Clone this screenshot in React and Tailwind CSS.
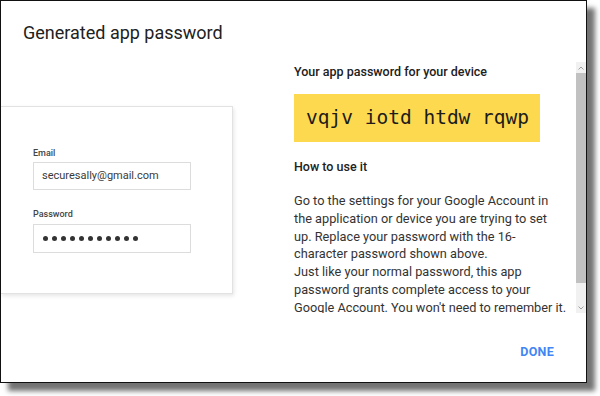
import React from "react";

export default function App() {
  const lines = [
    "Go to the settings for your Google Account in",
    "the application or device you are trying to set",
    "up. Replace your password with the 16-",
    "character password shown above.",
    "Just like your normal password, this app",
    "password grants complete access to your",
    "Google Account. You won't need to remember it.",
  ];
  return (
    <div className="w-[600px] h-[396px] bg-white" style={{ fontFamily: "Roboto, 'Liberation Sans', sans-serif" }}>
      <div className="w-[587px] h-[383px] border border-[#111] bg-white flex flex-col shadow-[8px_8px_5px_rgba(0,0,0,0.55)] overflow-hidden">
        <div className="pl-[22px] pt-[20px] text-[18px] leading-[24px] text-[#212121]">Generated app password</div>
        <div className="flex mt-[17px]">
          <div className="w-[284px] shrink-0">
            <div className="mt-[44px] w-[232px] h-[188px] bg-white border-y border-r border-[#e2e2e2] shadow-[1px_2px_4px_rgba(0,0,0,0.10)] pl-[32px] pt-[40px]">
              <div className="text-[9px] leading-[12px] font-medium text-[#444]">Email</div>
              <div className="mt-[3px] w-[158px] h-[28px] border border-[#dcdcdc] pl-[8px] flex items-center text-[11px] text-[#3a3a3a]">
                securesally@gmail.com
              </div>
              <div className="mt-[18px] text-[9px] leading-[12px] font-medium text-[#444]">Password</div>
              <div className="mt-[4px] w-[158px] h-[29px] border border-[#dcdcdc] pl-[9px] flex items-center gap-[4px]">
                {Array.from({ length: 11 }).map((_, i) => (
                  <span key={i} className="w-[5px] h-[5px] rounded-full bg-[#333] inline-block" />
                ))}
              </div>
            </div>
          </div>
          <div className="flex-1 flex h-[251px] overflow-hidden">
            <div className="flex-1 pl-[9px] overflow-hidden text-[#212121]">
              <div className="mt-[1px] text-[12.5px] leading-[18px] font-medium">Your app password for your device</div>
              <div
                className="mt-[13px] w-[246px] h-[48px] bg-[#fdd94f] pl-[12px] text-[19.5px] leading-[48px] text-[#1c1c1c] whitespace-nowrap"
                style={{ fontFamily: "'DejaVu Sans Mono', 'Liberation Mono', monospace" }}
              >
                vqjv iotd htdw rqwp
              </div>
              <div className="mt-[16px] text-[12.5px] leading-[18px] font-medium">How to use it</div>
              <div className="mt-[16px] text-[12.75px] leading-[17.8px] text-[#333] whitespace-nowrap">
                {lines.map((l, i) => (
                  <div key={i}>{l}</div>
                ))}
              </div>
            </div>
            <div className="w-[10px] shrink-0 bg-[#f1f1f1] flex flex-col">
              <div className="h-[11px] flex items-center justify-center">
                <svg width="6" height="4" viewBox="0 0 6 4"><path d="M0.5 3.5 L3 1 L5.5 3.5" fill="none" stroke="#a0a0a0" strokeWidth="1" /></svg>
              </div>
              <div className="h-[210px] bg-[#c1c1c1]" />
              <div className="flex-1" />
              <div className="h-[11px] flex items-center justify-center">
                <svg width="6" height="4" viewBox="0 0 6 4"><path d="M0.5 0.5 L3 3 L5.5 0.5" fill="none" stroke="#a0a0a0" strokeWidth="1" /></svg>
              </div>
            </div>
          </div>
        </div>
        <div className="flex justify-end pr-[32px] mt-[31px]">
          <span className="text-[12.5px] leading-[16px] font-bold text-[#4285f4] tracking-[0.3px]">DONE</span>
        </div>
      </div>
    </div>
  );
}
